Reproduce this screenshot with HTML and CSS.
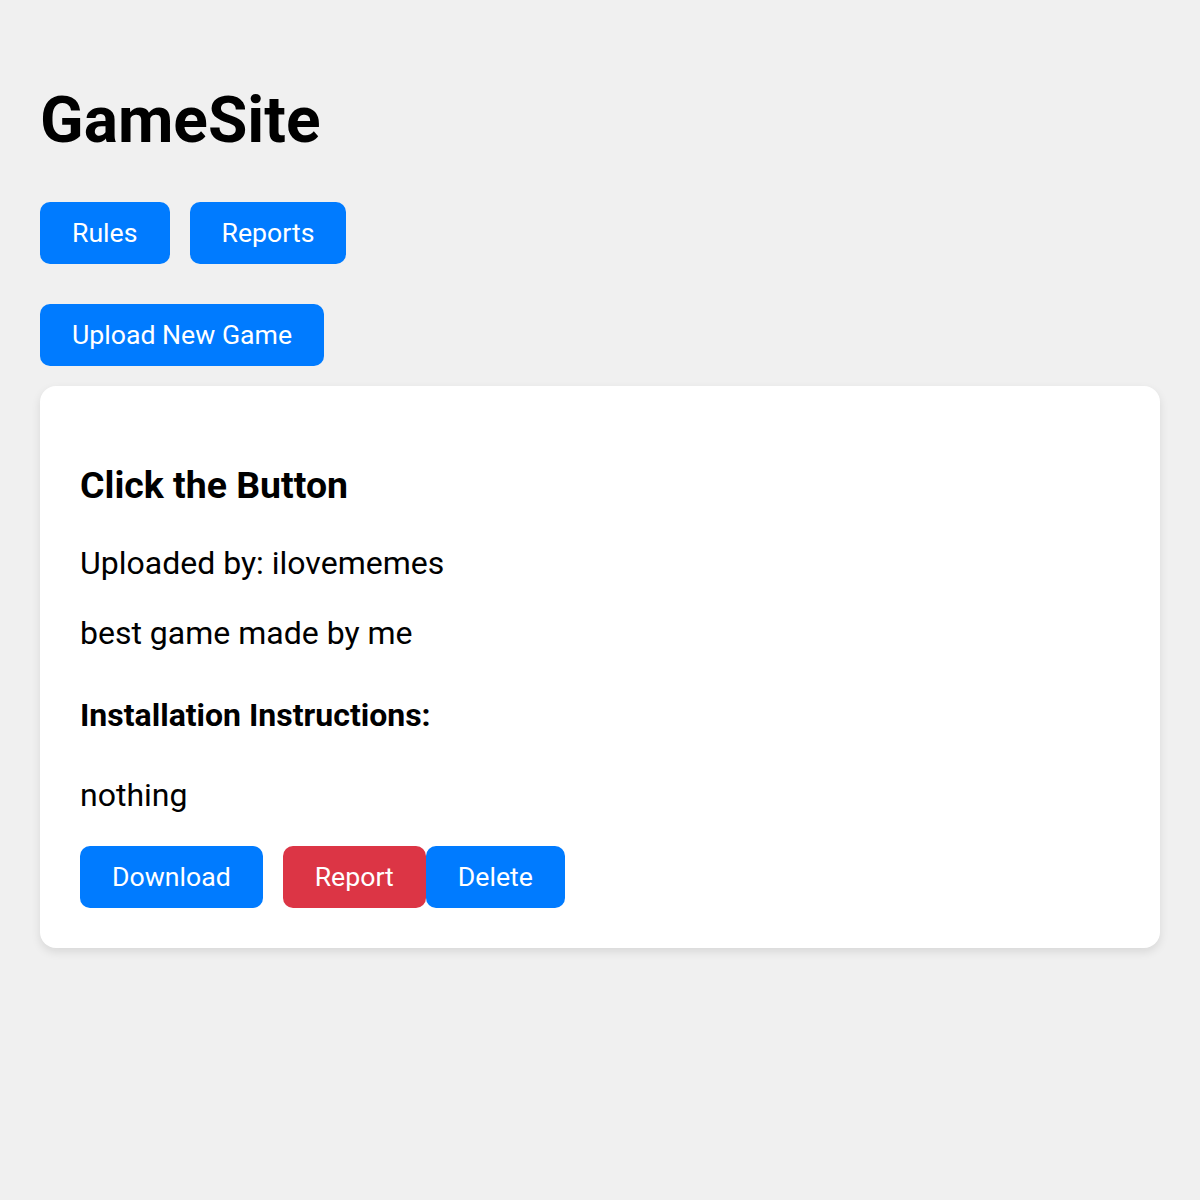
FILE: index.html
```html
<!DOCTYPE html>
<html lang="en">
<head>
  <meta charset="UTF-8" />
  <title>GameSite</title>
  <meta name="viewport" content="width=device-width, initial-scale=1.0" />
  <link rel="stylesheet" href="styles.css">
</head>
<body>
  <h1>GameSite</h1>

  <div class="nav">
    <button>Rules</button>
    <button>Reports</button>
  </div>

  <button class="upload">Upload New Game</button>

  <div class="game">
    <h3>Click the Button</h3>
    <p>Uploaded by: ilovememes</p>
    <p>best game made by me</p>
    <h4>Installation Instructions:</h4>
    <p>nothing</p>
    <div class="actions">
      <button>Download</button>
      <button class="danger">Report</button><button>Delete</button>
    </div>
  </div>
</body>
</html>
```

FILE: styles.css
```css
body {
  margin: 0;
  padding: 40px;
  font-family: Roboto, "Liberation Sans", sans-serif;
  background-color: #f0f0f0;
  color: #000;
}

h1 {
  font-size: 64px;
  margin: 43px 0 44px;
}

button {
  font-family: Roboto, "Liberation Sans", sans-serif;
  font-size: 26.67px;
  line-height: 32px;
  padding: 15px 32px;
  background-color: #007bff;
  color: white;
  border: none;
  border-radius: 10px;
  cursor: pointer;
}

.danger { background-color: #dc3545; }

.nav {
  display: flex;
  gap: 20px;
}

.upload {
  display: block;
  margin: 40px 0 20px;
}

.game {
  background-color: white;
  border-radius: 16px;
  padding: 40px;
  box-shadow: 0 4px 10px rgba(0, 0, 0, 0.1);
}

.game h3 {
  font-size: 37.44px;
  margin: 37.44px 0 36.5px;
}

.game p {
  font-size: 32px;
  margin: 32px 0;
}

.game h4 {
  font-size: 32px;
  margin: 44.5px 0 41.5px;
}

.actions {
  display: flex;
}

.actions button:first-child {
  margin-right: 20px;
}
```
